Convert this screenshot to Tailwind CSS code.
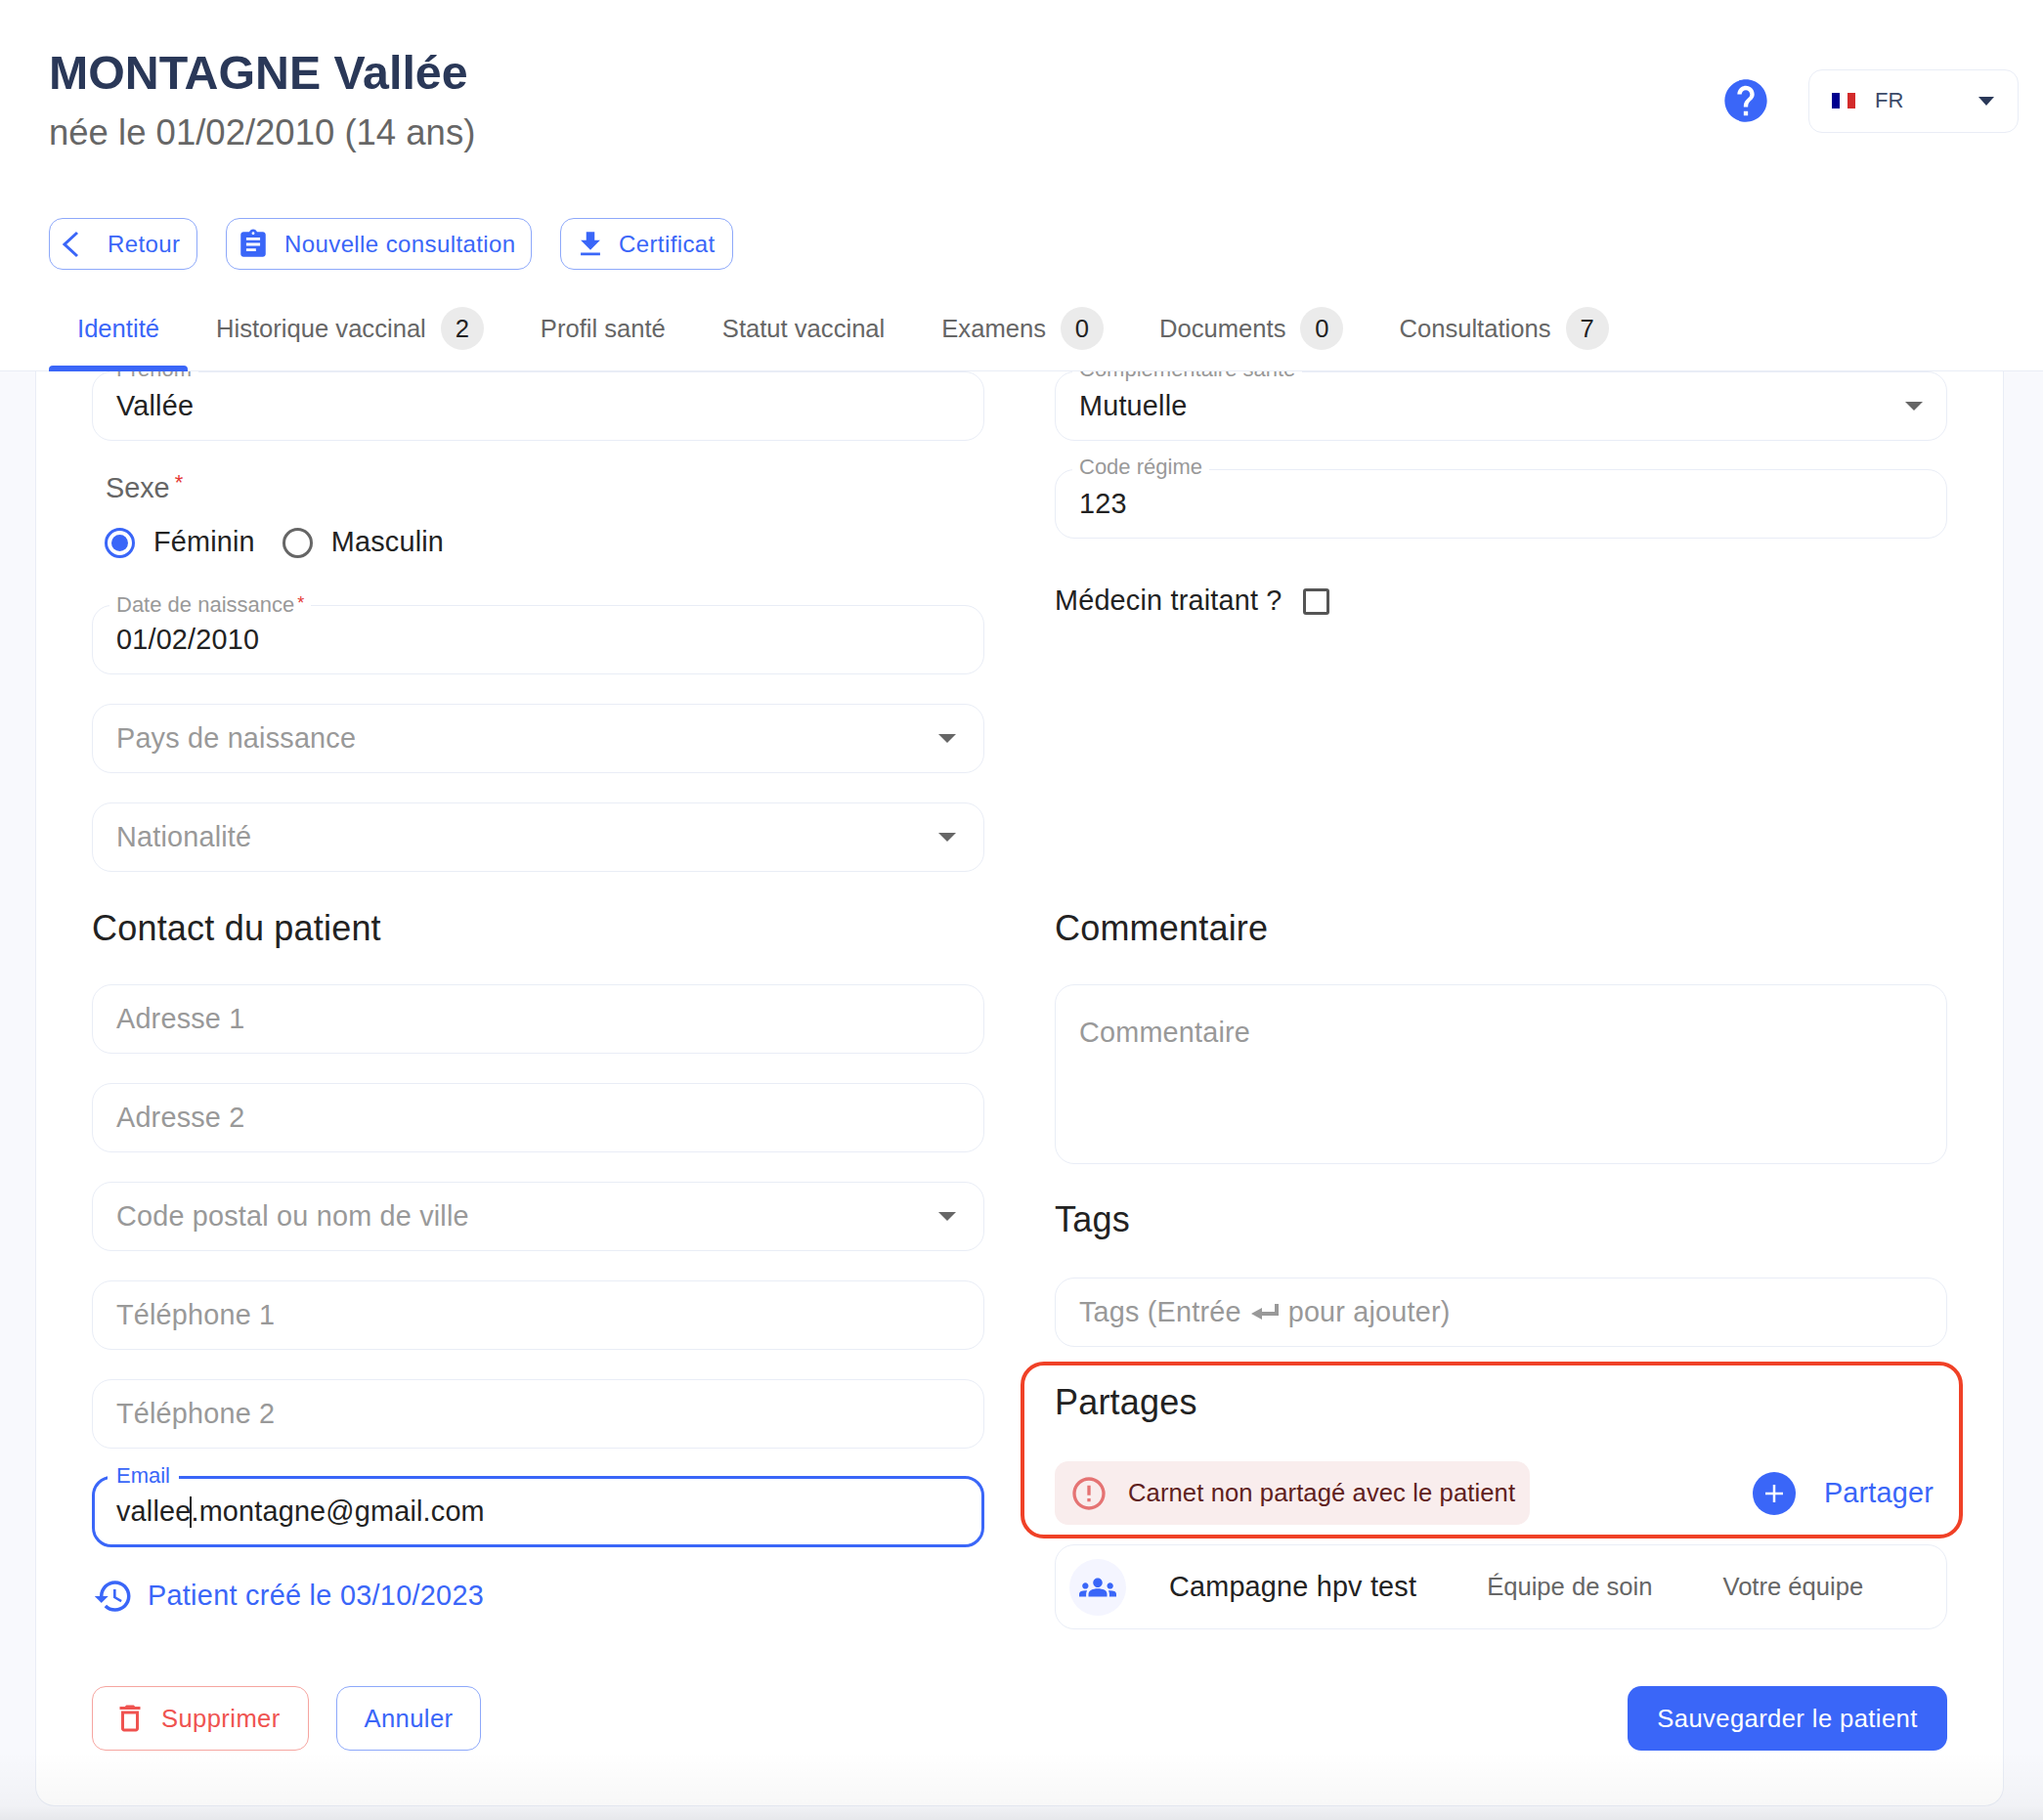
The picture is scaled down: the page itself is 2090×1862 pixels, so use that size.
<!DOCTYPE html>
<html lang="fr">
<head>
    <meta charset="UTF-8">
    <title>MONTAGNE Vallée</title>
    <script src="https://cdn.jsdelivr.net/npm/@tailwindcss/browser@4"></script>
</head>
<body class="bg-[#f8f9fd] font-['Liberation_Sans',sans-serif]">
<div class="relative w-[2090px] h-[1862px] overflow-hidden flex flex-col">

    <!-- header -->
    <header class="relative z-10 h-[380px] shrink-0 bg-white border-b border-[#e9edf6]">
        <div class="flex justify-between px-[50px] pt-[45px] pr-[25px]">
            <div>
                <h1 class="text-[48.3px] leading-[58px] font-bold text-[#2a3858]">MONTAGNE Vallée</h1>
                <p class="mt-[11px] text-[36.5px] leading-[44px] text-[#666]">née le 01/02/2010 (14 ans)</p>
            </div>
            <div class="flex items-start">
                <svg class="mt-[32px] mr-[38px] w-[52px] h-[52px] text-[#3a66f8]" viewBox="0 0 24 24" fill="currentColor"><path d="M12 2C6.48 2 2 6.48 2 12s4.48 10 10 10 10-4.48 10-10S17.52 2 12 2zm1 17h-2v-2h2v2zm2.07-7.75l-.9.92C13.45 12.9 13 13.5 13 15h-2v-.5c0-1.1.45-2.1 1.17-2.83l1.24-1.26c.37-.36.59-.86.59-1.41 0-1.1-.9-2-2-2s-2 .9-2 2H8c0-2.21 1.79-4 4-4s4 1.79 4 4c0 .88-.36 1.68-.93 2.25z"/></svg>
                <div class="mt-[26px] w-[215px] h-[65px] flex items-center pl-[23px] pr-[24px] border border-[#e9edf6] rounded-[14px]">
                    <div class="flex w-[24px] h-[16px] -mt-[2px]">
                        <span class="flex-1 bg-[#00008f]"></span><span class="flex-1 bg-white"></span><span class="flex-1 bg-[#d32b2b]"></span>
                    </div>
                    <span class="ml-[20px] -mt-[2px] text-[22px] text-[#3c4a69]">FR</span>
                    <span class="ml-auto w-0 h-0 border-x-[8px] border-x-transparent border-t-[9px] border-t-[#2a3858]"></span>
                </div>
            </div>
        </div>

        <div class="flex gap-[29px] px-[50px] mt-[65px]">
            <button class="h-[53px] w-[152px] flex items-center pl-[11px] rounded-[14px] border border-[#8da8fa] text-[#3a66f8] text-[24px] tracking-[0.4px]">
                <svg class="w-[24px] h-[30px]" viewBox="0 0 24 30" fill="none" stroke="currentColor" stroke-width="3"><path d="M17 3 4 15l13 12"/></svg>
                <span class="ml-[24px]">Retour</span>
            </button>
            <button class="h-[53px] w-[313px] flex items-center pl-[10px] rounded-[14px] border border-[#8da8fa] text-[#3a66f8] text-[24px] tracking-[0.4px]">
                <svg class="w-[34px] h-[34px]" viewBox="0 0 24 24" fill="currentColor"><path d="M19 3h-4.18C14.4 1.84 13.3 1 12 1c-1.3 0-2.4.84-2.82 2H5c-1.1 0-2 .9-2 2v14c0 1.1.9 2 2 2h14c1.1 0 2-.9 2-2V5c0-1.1-.9-2-2-2zm-7 0c.55 0 1 .45 1 1s-.45 1-1 1-1-.45-1-1 .45-1 1-1zm2 14H7v-2h7v2zm3-4H7v-2h10v2zm0-4H7V7h10v2z"/></svg>
                <span class="ml-[15px]">Nouvelle consultation</span>
            </button>
            <button class="h-[53px] w-[177px] flex items-center pl-[13px] rounded-[14px] border border-[#8da8fa] text-[#3a66f8] text-[24px] tracking-[0.4px]">
                <svg class="w-[34px] h-[34px]" viewBox="0 0 24 24" fill="currentColor"><path d="M19 9h-4V3H9v6H5l7 7 7-7zM5 18v2h14v-2H5z"/></svg>
                <span class="ml-[12px]">Certificat</span>
            </button>
        </div>

        <nav class="absolute left-[50px] top-[314px] flex h-[66px] text-[25.6px] text-[#666]">
            <div class="relative w-[142px] h-[44px] flex items-center justify-center text-[#3a66f8]">Identité
                <span class="absolute left-0 right-0 top-[60px] h-[6px] bg-[#3a66f8] rounded-t-[4px]"></span>
            </div>
            <div class="h-[44px] flex items-center pl-[29px] pr-[29px] gap-[15px]">Historique vaccinal <span class="w-[44px] h-[44px] rounded-full bg-[#ebebeb] text-[#222] flex items-center justify-center">2</span></div>
            <div class="h-[44px] flex items-center px-[29px]">Profil santé</div>
            <div class="h-[44px] flex items-center px-[29px]">Statut vaccinal</div>
            <div class="h-[44px] flex items-center pl-[29px] pr-[28px] gap-[15px]">Examens <span class="w-[44px] h-[44px] rounded-full bg-[#ebebeb] text-[#222] flex items-center justify-center">0</span></div>
            <div class="h-[44px] flex items-center pl-[29px] pr-[28px] gap-[15px]">Documents <span class="w-[44px] h-[44px] rounded-full bg-[#ebebeb] text-[#222] flex items-center justify-center">0</span></div>
            <div class="h-[44px] flex items-center px-[29px] gap-[15px]">Consultations <span class="w-[44px] h-[44px] rounded-full bg-[#ebebeb] text-[#222] flex items-center justify-center">7</span></div>
        </nav>
    </header>

    <!-- form card -->
    <main class="ml-[36px] w-[2014px] h-[1468px] shrink-0 bg-white border-x border-b border-[#e9edf6] rounded-b-[20px] px-[57px]">
        <div class="grid grid-cols-[913px_913px] gap-x-[72px] text-[28.8px]">

            <!-- top left -->
            <div class="h-[512px]">
                <div class="relative h-[71px] flex items-center px-[24px] border border-[#e9edf6] rounded-[20px] text-[#222] tracking-[0.2px]">
                    <span class="absolute left-[17px] top-[-15px] px-[7px] bg-white text-[22px] leading-[24px] text-[#999] tracking-normal">Prénom</span>
                    Vallée
                </div>
                <div class="mt-[27px] ml-[14px] text-[28.8px] leading-[32px] text-[#666]">Sexe<span class="ml-[5px] align-[8px] text-[22px] text-[#e53935]">*</span></div>
                <div class="mt-[23px] ml-[13px] flex items-center text-[#222] h-[34px] tracking-[0.2px]">
                    <span class="w-[31px] h-[31px] rounded-full border-[3px] border-[#3a66f8] flex items-center justify-center"><span class="w-[17px] h-[17px] rounded-full bg-[#3a66f8]"></span></span>
                    <span class="ml-[19px]">Féminin</span>
                    <span class="ml-[28px] w-[31px] h-[31px] rounded-full border-[3px] border-[#666]"></span>
                    <span class="ml-[19px]">Masculin</span>
                </div>
                <div class="relative mt-[47px] h-[71px] flex items-center px-[24px] border border-[#e9edf6] rounded-[20px] text-[#222] tracking-[0.2px]">
                    <span class="absolute left-[17px] top-[-15px] px-[7px] bg-white text-[22px] leading-[24px] text-[#999] tracking-normal">Date de naissance<span class="ml-[3px] align-[3px] text-[18px] text-[#e53935]">*</span></span>
                    01/02/2010
                </div>
                <div class="mt-[30px] h-[71px] flex items-center justify-between pl-[24px] pr-[28px] border border-[#e9edf6] rounded-[20px] text-[#999] tracking-[0.2px]">
                    Pays de naissance
                    <span class="w-0 h-0 border-x-[9px] border-x-transparent border-t-[9px] border-t-[#666]"></span>
                </div>
                <div class="mt-[30px] h-[71px] flex items-center justify-between pl-[24px] pr-[28px] border border-[#e9edf6] rounded-[20px] text-[#999] tracking-[0.2px]">
                    Nationalité
                    <span class="w-0 h-0 border-x-[9px] border-x-transparent border-t-[9px] border-t-[#666]"></span>
                </div>
            </div>

            <!-- top right -->
            <div class="h-[512px]">
                <div class="relative h-[71px] flex items-center justify-between pl-[24px] pr-[24px] border border-[#e9edf6] rounded-[20px] text-[#222] tracking-[0.2px]">
                    <span class="absolute left-[17px] top-[-15px] px-[7px] bg-white text-[22px] leading-[24px] text-[#999] tracking-normal">Complémentaire santé</span>
                    Mutuelle
                    <span class="w-0 h-0 border-x-[9px] border-x-transparent border-t-[9px] border-t-[#666]"></span>
                </div>
                <div class="relative mt-[29px] h-[71px] flex items-center px-[24px] border border-[#e9edf6] rounded-[20px] text-[#222] tracking-[0.2px]">
                    <span class="absolute left-[17px] top-[-15px] px-[7px] bg-white text-[22px] leading-[24px] text-[#999] tracking-normal">Code régime</span>
                    123
                </div>
                <div class="mt-[47px] flex items-center h-[34px] text-[#222] tracking-[0.2px]">
                    Médecin traitant ?
                    <span class="ml-[21px] w-[27px] h-[27px] border-[3px] border-[#555] rounded-[3px]"></span>
                </div>
            </div>

            <!-- contact -->
            <div class="pt-[38px]">
                <h2 class="text-[36px] leading-[40px] tracking-[0.2px] text-[#222]">Contact du patient</h2>
                <div class="mt-[37px] flex flex-col gap-[30px] text-[#999] tracking-[0.2px]">
                    <div class="h-[71px] flex items-center px-[24px] border border-[#e9edf6] rounded-[20px]">Adresse 1</div>
                    <div class="h-[71px] flex items-center px-[24px] border border-[#e9edf6] rounded-[20px]">Adresse 2</div>
                    <div class="h-[71px] flex items-center justify-between pl-[24px] pr-[28px] border border-[#e9edf6] rounded-[20px]">
                        Code postal ou nom de ville
                        <span class="w-0 h-0 border-x-[9px] border-x-transparent border-t-[9px] border-t-[#666]"></span>
                    </div>
                    <div class="h-[71px] flex items-center px-[24px] border border-[#e9edf6] rounded-[20px]">Téléphone 1</div>
                    <div class="h-[71px] flex items-center px-[24px] border border-[#e9edf6] rounded-[20px]">Téléphone 2</div>
                    <div class="relative h-[73px] -mt-[2px] flex items-center px-[22px] border-[3px] border-[#3a66f8] rounded-[20px] text-[#222]">
                        <span class="absolute left-[13px] top-[-15px] px-[9px] bg-white text-[22px] leading-[24px] text-[#3a66f8] tracking-normal">Email</span>
                        vallee<span class="inline-block w-[2px] h-[32px] bg-[#222] -mx-[1px]"></span>.montagne@gmail.com
                    </div>
                </div>
                <div class="mt-[28px] ml-[1px] flex items-center text-[#3a66f8] tracking-[0.3px]">
                    <svg class="w-[42px] h-[42px]" viewBox="0 0 24 24" fill="currentColor"><path d="M13 3c-4.97 0-9 4.03-9 9H1l3.89 3.89.07.14L9 12H6c0-3.87 3.13-7 7-7s7 3.13 7 7-3.13 7-7 7c-1.93 0-3.68-.79-4.94-2.06l-1.42 1.42C8.27 19.99 10.51 21 13 21c4.97 0 9-4.03 9-9s-4.03-9-9-9zm-1 5v5l4.28 2.54.72-1.21-3.5-2.08V8H12z"/></svg>
                    <span class="ml-[14px]">Patient créé le 03/10/2023</span>
                </div>
            </div>

            <!-- comment, tags, shares -->
            <div class="relative pt-[38px]">
                <h2 class="text-[36px] leading-[40px] tracking-[0.2px] text-[#222]">Commentaire</h2>
                <div class="mt-[37px] h-[184px] px-[24px] pt-[27px] border border-[#e9edf6] rounded-[20px] text-[#999] tracking-[0.2px]">Commentaire</div>
                <h2 class="mt-[37px] text-[36px] leading-[40px] tracking-[0.2px] text-[#222]">Tags</h2>
                <div class="mt-[39px] h-[71px] flex items-center px-[24px] border border-[#e9edf6] rounded-[20px] text-[#999] tracking-[0.2px]">
                    Tags (Entrée
                    <svg class="mx-[8px] w-[32px] h-[24px]" viewBox="0 0 30 24" fill="currentColor"><path d="M12 7 1 13l11 6v-4h17V3h-4v8H12z"/></svg>
                    pour ajouter)
                </div>
                <div class="relative">
                    <h2 class="mt-[37px] text-[36px] leading-[40px] tracking-[0.2px] text-[#222]">Partages</h2>
                    <div class="mt-[40px] flex items-center justify-between h-[65px]">
                        <div class="h-[65px] w-[486px] flex items-center pl-[15px] rounded-[14px] bg-[#f9eded] text-[25.6px] text-[#5f2120] tracking-[0.1px]">
                            <svg class="w-[40px] h-[40px] text-[#e57373]" viewBox="0 0 24 24" fill="currentColor"><path d="M11 15h2v2h-2zm0-8h2v6h-2zm.99-5C6.47 2 2 6.48 2 12s4.47 10 9.99 10C17.52 22 22 17.52 22 12S17.52 2 11.99 2zM12 20c-4.42 0-8-3.58-8-8s3.58-8 8-8 8 3.58 8 8-3.58 8-8 8z"/></svg>
                            <span class="ml-[20px]">Carnet non partagé avec le patient</span>
                        </div>
                        <div class="flex items-center pr-[14px] text-[#3a66f8] tracking-[0.2px]">
                            <span class="w-[44px] h-[44px] rounded-full bg-[#3a66f8] flex items-center justify-center">
                                <svg class="w-[24px] h-[24px]" viewBox="0 0 24 24" fill="none" stroke="white" stroke-width="2.5"><path d="M12 3v18M3 12h18"/></svg>
                            </span>
                            <span class="ml-[29px]">Partager</span>
                        </div>
                    </div>
                    <!-- annotation drawn over the section -->
                    <div class="absolute left-[-35px] right-[-16px] top-[-22px] h-[181px] border-[4px] border-[#f04127] rounded-[24px] pointer-events-none"></div>
                </div>
                <div class="mt-[20px] h-[87px] flex items-center pl-[14px] border border-[#e9edf6] rounded-[20px]">
                    <span class="w-[58px] h-[58px] rounded-full bg-[#f4f5ff] flex items-center justify-center">
                        <svg class="w-[38px] h-[38px] text-[#3a66f8]" viewBox="0 0 24 24" fill="currentColor"><path d="M12 12.75c1.63 0 3.07.39 4.24.9 1.08.48 1.76 1.56 1.76 2.73V18H6v-1.61c0-1.18.68-2.26 1.76-2.73 1.17-.52 2.61-.91 4.24-.91zM4 13c1.1 0 2-.9 2-2s-.9-2-2-2-2 .9-2 2 .9 2 2 2zm1.13 1.1c-.37-.06-.74-.1-1.13-.1-.99 0-1.93.21-2.78.58C.48 14.9 0 15.62 0 16.43V18h4.5v-1.61c0-.83.23-1.61.63-2.29zM20 13c1.1 0 2-.9 2-2s-.9-2-2-2-2 .9-2 2 .9 2 2 2zm4 3.43c0-.81-.48-1.53-1.22-1.85-.85-.37-1.79-.58-2.78-.58-.39 0-.76.04-1.13.1.4.68.63 1.46.63 2.29V18H24v-1.57zM12 6c1.66 0 3 1.34 3 3s-1.34 3-3 3-3-1.34-3-3 1.34-3 3-3z"/></svg>
                    </span>
                    <span class="ml-[44px] text-[#222] tracking-[0.2px]">Campagne hpv test</span>
                    <span class="ml-[72px] text-[25.6px] text-[#666]">Équipe de soin</span>
                    <span class="ml-[72px] text-[25.6px] text-[#666]">Votre équipe</span>
                </div>
            </div>
        </div>

        <!-- actions -->
        <div class="mt-[58px] flex items-center text-[25.6px] tracking-[0.4px]">
            <button class="h-[66px] w-[222px] flex items-center pl-[20px] rounded-[14px] border border-[#f6a5a0] text-[#ef5350]">
                <svg class="w-[36px] h-[36px]" viewBox="0 0 24 24" fill="currentColor"><path d="M6 19c0 1.1.9 2 2 2h8c1.1 0 2-.9 2-2V7H6v12zM8 9h8v10H8V9zm7.5-5l-1-1h-5l-1 1H5v2h14V4h-3.5z"/></svg>
                <span class="ml-[14px]">Supprimer</span>
            </button>
            <button class="ml-[28px] h-[66px] w-[148px] rounded-[14px] border border-[#8da8fa] text-[#3a66f8]">Annuler</button>
            <button class="ml-auto h-[66px] w-[327px] rounded-[14px] bg-[#3a66f8] text-white">Sauvegarder le patient</button>
        </div>
    </main>

    <!-- fade at the bottom of the window -->
    <div class="absolute left-0 right-0 bottom-0 h-[70px] bg-linear-to-b from-transparent via-black/3 via-80% to-black/7 pointer-events-none"></div>
</div>
</body>
</html>
